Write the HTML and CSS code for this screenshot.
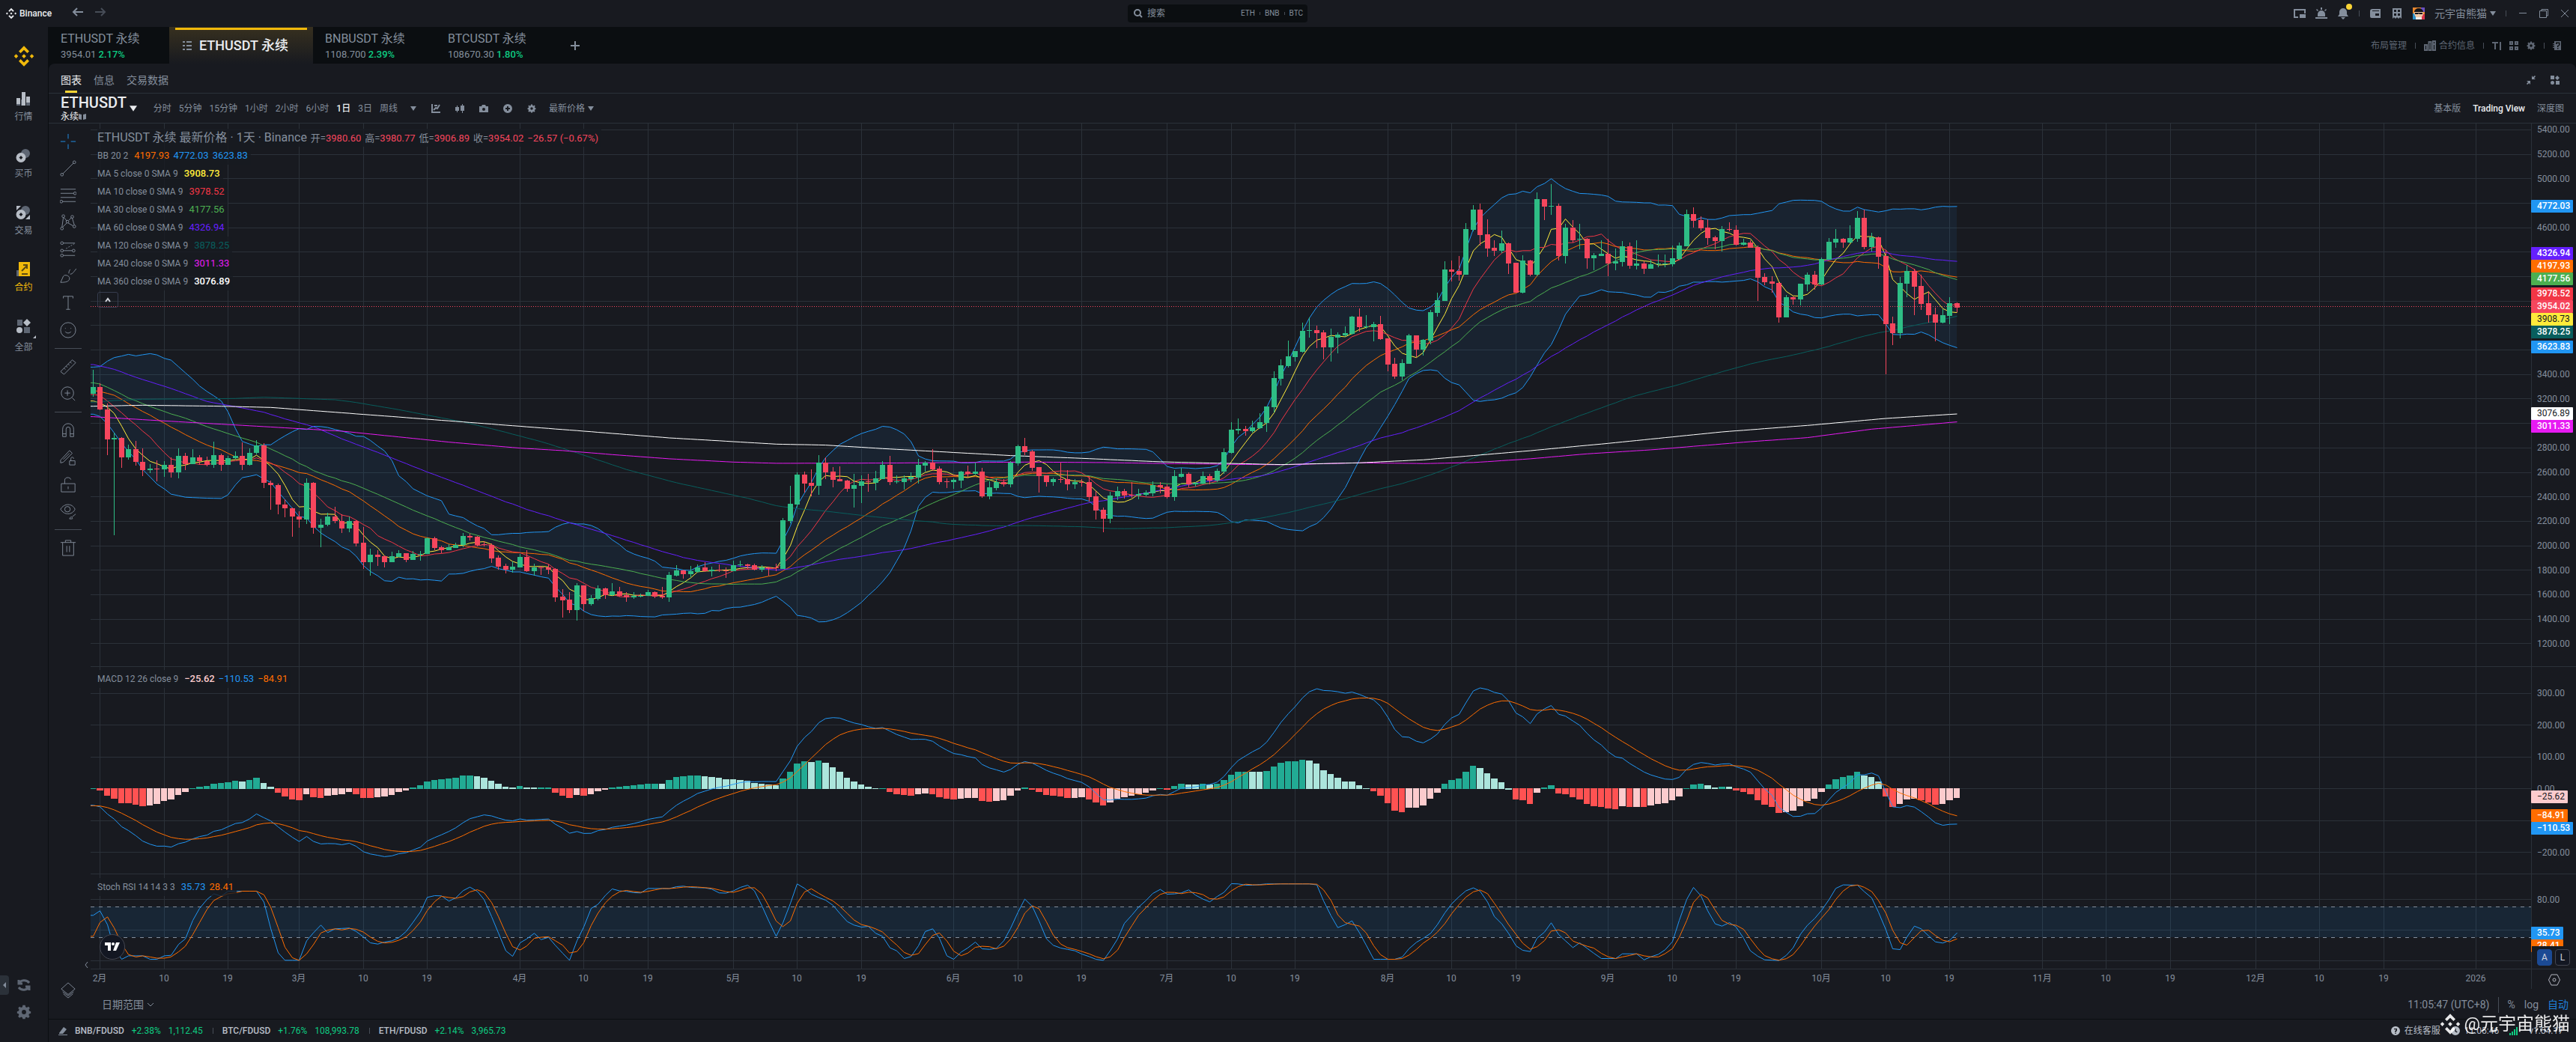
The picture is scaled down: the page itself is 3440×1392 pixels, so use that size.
FILE: index.html
```html
<!DOCTYPE html>
<html lang="zh-CN">
<head>
    <meta charset="UTF-8">
    <meta name="viewport" content="width=device-width, initial-scale=1.0">
    <title>ETHUSDT 永续 | Binance</title>
    <link rel="stylesheet" href="styles.css">
</head>
<body>
    <!-- Shared icons -->
    <svg class="sprite" width="0" height="0" aria-hidden="true">
        <symbol id="bnb" viewBox="0 0 24 24"><path d="M12 1l5.600 5.700-2.100 2.100L12 5.300 8.500 8.800 6.400 6.700zM3.600 9.700L5.800 12l-2.200 2.300L1.400 12zM12 9.700l2.300 2.300-2.300 2.300L9.700 12zM20.400 9.700l2.200 2.300-2.200 2.300-2.200-2.300zM8.500 15.200l3.500 3.500 3.500-3.500 2.100 2.100L12 23l-5.600-5.700z"/></symbol>
        <symbol id="gear" viewBox="0 0 24 24"><path fill-rule="evenodd" d="M10 1h4l.6 3 2 .9L19.300 3.200l2.100 2.500-1.600 2.500.8 1.900L23 11v3l-2.600.8-.8 1.900 1.500 2.500-2.500 2.300-2.300-1.500-2 .8L14 23h-4l-.6-2.300-2-.8-2.300 1.500-2.500-2.300 1.500-2.500-.8-1.900L1 14v-3l2.500-.9.8-1.900-1.600-2.500 2.100-2.500 2.600 1.700 2-.9zM12 8.500a3.500 3.500 0 1 0 0 7 3.500 3.500 0 0 0 0-7z"/></symbol>
        <symbol id="caret" viewBox="0 0 8 8"><path d="M0 1h8L4 7z"/></symbol>
    </svg>

    <header class="titlebar">
        <div class="brand"><svg class="i14"><use href="#bnb"/></svg><span>Binance</span></div>
        <button class="icon-btn back" aria-label="后退"><svg class="i16 line" viewBox="0 0 16 16"><path d="M15 8H2M7 3L2 8l5 5"/></svg></button>
        <button class="icon-btn forward" aria-label="前进"><svg class="i16 line" viewBox="0 0 16 16"><path d="M1 8h13M9 3l5 5-5 5"/></svg></button>
        <label class="search">
            <svg class="i12 line" viewBox="0 0 12 12"><circle cx="5" cy="5" r="4"/><path d="M8 8l3 3"/></svg>
            <input type="text" placeholder="搜索" aria-label="搜索">
            <span>ETH</span><i></i><span>BNB</span><i></i><span>BTC</span>
        </label>
        <div class="window-tools">
            <button class="icon-btn" aria-label="小窗"><svg class="i16" viewBox="0 0 16 16"><path d="M0 2h16v6h-2V4H2v8h4v2H0z"/><path d="M8 9h8v5H8z"/></svg></button>
            <button class="icon-btn" aria-label="提醒"><svg class="i16" viewBox="0 0 16 16"><path d="M0 13h16v2H0zM3 12V9a5 5 0 0 1 10 0v3zM7 0h2v3H7zM1 3l1-1 2 2-1 1zM14 2l1 1-2 2-1-1z"/></svg></button>
            <button class="icon-btn bell" aria-label="通知"><svg class="i16" viewBox="0 0 16 16"><path d="M1 12l2-3V6a5 5 0 0 1 10 0v3l2 3zM5 13h6l-3 3z"/></svg></button>
            <i class="bar"></i>
            <button class="icon-btn" aria-label="钱包"><svg class="i16" viewBox="0 0 16 16"><path fill-rule="evenodd" d="M4 2h11v12H3a2 2 0 0 1-2-2V5a3 3 0 0 1 3-3zM4 4v1h9V4zM8 8v3h5V8z"/></svg></button>
            <button class="icon-btn" aria-label="订单"><svg class="i16" viewBox="0 0 16 16"><path fill-rule="evenodd" d="M2 1h12v14l-2-2-2 2-2-2-2 2-2-2-2 2zM4 3v3h3V3zM9 3v3h3V3zM4 8v3h3V8zM9 8v3h3V8z"/></svg></button>
            <svg class="i16 avatar" viewBox="0 0 16 16"><path fill="#e8862e" d="M0 0h16v16H0z"/><path fill="#2d8fc9" d="M0 8h5v8H0z"/><path fill="#d8334a" d="M11 9h5v7h-5z"/><path fill="#6a4fc0" d="M11 0h5v6h-5z"/><circle cx="8" cy="8" r="6" fill="#f1c9a8"/><path fill="#15151a" d="M2 6a6 5 0 0 1 12 0zM3 7h10v2H9L8 8 7 9H3z"/><path fill="#eee" d="M4 13h8v3H4z"/></svg>
            <button class="user">元宇宙熊猫<svg class="i8"><use href="#caret"/></svg></button>
            <i class="bar"></i>
            <button class="icon-btn" aria-label="最小化"><svg class="i12 thin" viewBox="0 0 12 12"><path d="M1 5.500h10"/></svg></button>
            <button class="icon-btn" aria-label="还原"><svg class="i12 thin" viewBox="0 0 12 12"><path d="M.5 2.500h9v9h-9zM3 2V.5h8.500V9H10"/></svg></button>
            <button class="icon-btn" aria-label="关闭"><svg class="i12 thin" viewBox="0 0 12 12"><path d="M1 1l10 10M11 1L1 11"/></svg></button>
        </div>
    </header>

    <div class="workspace">
        <nav class="sidebar">
            <svg class="logo"><use href="#bnb"/></svg>
            <a href="#"><svg class="i20" viewBox="0 0 20 20"><path class="dim" d="M7 11h6v8H7zM1 17h5v2H1zM14 15h5v4h-5z"/><path d="M1 9h5v8H1zM8 1h5v18H8zM14 7h5v8h-5z"/></svg>行情</a>
            <a href="#"><svg class="i20" viewBox="0 0 20 20"><circle class="dim" cx="13" cy="7" r="6"/><path fill-rule="evenodd" d="M7 6a6.500 6.500 0 1 0 0 13A6.500 6.500 0 0 0 7 6zM7 10l2.500 2.500L7 15l-2.500-2.500z"/></svg>买币</a>
            <a href="#"><svg class="i20" viewBox="0 0 20 20"><circle class="dim" cx="13" cy="7" r="6"/><path fill-rule="evenodd" d="M7 6a6.500 6.500 0 1 0 0 13A6.500 6.500 0 0 0 7 6zM7 10l2.500 2.500L7 15l-2.500-2.500zM1 1h6L1 7zM19 13v6h-6z"/></svg>交易</a>
            <a href="#" class="on"><svg class="i20" viewBox="0 0 20 20"><path class="dim" d="M1 11h5v8H1z"/><path d="M4 0h15v19H4z"/><path fill="none" stroke="#5e4a12" stroke-width="2" d="M8 12l7-7M10 4h5v5M8 16h8"/></svg>合约</a>
            <a href="#" class="more"><svg class="i20" viewBox="0 0 20 20"><path class="dim" d="M2 1h7v8H2zM11 11h8v8h-8z"/><path d="M15 0l5 5-5 5-5-5z"/><circle cx="5" cy="15" r="4"/></svg>全部</a>
            <div class="sidebar-foot">
                <button class="collapse" aria-label="收起"><svg class="i8" viewBox="0 0 8 8"><path d="M6 0v8L2 4z"/></svg></button>
                <button class="icon-btn" aria-label="刷新"><svg class="i20 bold" viewBox="0 0 20 20"><path d="M3 3v5h5M3 8a8 7 0 0 1 14-1M17 17v-5h-5M17 12a8 7 0 0 1-14 1"/></svg></button>
                <button class="icon-btn" aria-label="设置"><svg class="i20"><use href="#gear"/></svg></button>
            </div>
        </nav>

        <main class="main">
            <div class="pairs">
                <a href="#" class="pair"><b>ETHUSDT 永续</b><span>3954.01 <em>2.17%</em></span></a>
                <a href="#" class="pair active"><svg class="i12" viewBox="0 0 12 12"><path d="M0 0h3v2H0zM5 0h7v2H5zM0 5h3v2H0zM5 5h7v2H5zM0 10h3v2H0zM5 10h7v2H5z"/></svg><b>ETHUSDT 永续</b></a>
                <a href="#" class="pair"><b>BNBUSDT 永续</b><span>1108.700 <em>2.39%</em></span></a>
                <a href="#" class="pair"><b>BTCUSDT 永续</b><span>108670.30 <em>1.80%</em></span></a>
                <button class="icon-btn add" aria-label="添加"><svg class="i12 line" viewBox="0 0 12 12"><path d="M6 0v12M0 6h12"/></svg></button>
                <div class="pairs-tools">
                    <button>布局管理</button><i class="bar"></i>
                    <button><svg class="i16 line" viewBox="0 0 16 16"><path d="M1 7h3v7H1zM6.500 3h3v11h-3zM12 2h3v12h-3zM12 6h3"/></svg>合约信息</button><i class="bar"></i>
                    <button aria-label="字体"><svg class="i12 line" viewBox="0 0 12 12"><path d="M0 2h8M4 2v9M11 1v11"/></svg></button>
                    <button aria-label="布局"><svg class="i12 line" viewBox="0 0 12 12"><path d="M1 1h3v3H1zM8 1h3v3H8zM1 8h3v3H1zM8 8h3v3H8z"/></svg></button>
                    <button aria-label="设置"><svg class="i12"><use href="#gear"/></svg></button><i class="bar"></i>
                    <button aria-label="帮助"><svg class="i12" viewBox="0 0 12 12"><path fill-rule="evenodd" d="M2 0h9v12H2V9H0V8h2V6.500H0v-1h2V4H0V3h2zM4 4h1.500V3H8v2L6 6v2h1.500V6.600L9.500 5.500v-4H4zM6 9v1.500h1.500V9z"/></svg></button>
                </div>
            </div>

            <section class="panel">
                <div class="subtabs">
                    <a href="#" class="on">图表</a><a href="#">信息</a><a href="#">交易数据</a>
                    <div class="subtabs-tools">
                        <button class="icon-btn" aria-label="缩小"><svg class="i12" viewBox="0 0 12 12"><path d="M7 0v5h5L10 3.500 12 1l-1-1-2.500 2zM5 12V7H0l2 1.500L0 11l1 1 2.500-2z"/></svg></button>
                        <button class="icon-btn" aria-label="组件"><svg class="i12" viewBox="0 0 12 12"><path d="M0 0h5v5H0zM9 0l3 3-3 3-3-3zM7 7h5v5H7z"/><circle cx="2.500" cy="9.500" r="2.500"/></svg></button>
                    </div>
                </div>

                <div class="toolbar">
                    <button class="symbol"><strong>ETHUSDT</strong><small>永续<svg class="i10" viewBox="0 0 10 10"><path d="M0 1l4 1v7L0 8zM10 1L6 2v7l4-1z"/></svg></small></button>
                    <svg class="i10 symbol-caret"><use href="#caret"/></svg>
                    <div class="intervals">
                        <button>分时</button><button>5分钟</button><button>15分钟</button><button>1小时</button><button>2小时</button><button>6小时</button><button class="on">1日</button><button>3日</button><button>周线</button>
                    </div>
                    <div class="chart-tools">
                        <button class="icon-btn" aria-label="更多周期"><svg class="i8"><use href="#caret"/></svg></button>
                        <button class="icon-btn" aria-label="指标"><svg class="i12 line" viewBox="0 0 12 12"><path d="M1 0v11h11M3 8l3-3 2 1 3-5M4 2l4 0"/></svg></button>
                        <button class="icon-btn" aria-label="K线样式"><svg class="i12" viewBox="0 0 12 12"><path d="M2 2h1v2h2v5H3v2H2V9H0V4h2zM9 0h1v2h2v7h-2v3H9V9H7V2h2z"/></svg></button>
                        <button class="icon-btn" aria-label="截图"><svg class="i12" viewBox="0 0 12 12"><path fill-rule="evenodd" d="M4 1h4l1 2h3v8H0V3h3zM6 5a2 2 0 1 0 0 4 2 2 0 0 0 0-4z"/></svg></button>
                        <button class="icon-btn" aria-label="添加"><svg class="i12" viewBox="0 0 12 12"><path fill-rule="evenodd" d="M6 0a6 6 0 1 0 0 12A6 6 0 0 0 6 0zM5 3h2v2h2v2H7v2H5V7H3V5h2z"/></svg></button>
                        <button class="icon-btn" aria-label="设置"><svg class="i12"><use href="#gear"/></svg></button>
                    </div>
                    <button class="price-type">最新价格<svg class="i8"><use href="#caret"/></svg></button>
                    <div class="views"><a href="#">基本版</a><a href="#" class="on">Trading View</a><a href="#">深度图</a></div>
                </div>

                <div class="chart-row">
                    <div class="draw-tools">
                        <button class="cross" aria-label="十字线"><svg viewBox="0 0 24 24"><path d="M12 1v7M12 16v7M1 12h7M16 12h7"/></svg></button>
                        <button aria-label="趋势线"><svg viewBox="0 0 24 24"><circle cx="3" cy="21" r="2"/><circle cx="21" cy="3" r="2"/><path d="M4.500 19.500l15-15"/></svg></button>
                        <button aria-label="斐波那契"><svg viewBox="0 0 24 24"><path d="M1 3h22M1 9h19M1 15h22M4 21h19"/><circle cx="22" cy="9" r="2"/><circle cx="2" cy="21" r="2"/></svg></button>
                        <button aria-label="形态"><svg viewBox="0 0 24 24"><circle cx="5" cy="3" r="2"/><circle cx="18" cy="4" r="2"/><circle cx="3" cy="21" r="2"/><circle cx="21" cy="18" r="2"/><circle cx="11" cy="11" r="2"/><path d="M5 5L3 19M6 5l4 5M13 9l4-4M18 6l3 10M4 19l6-6M12 13l7 4"/></svg></button>
                        <button aria-label="预测"><svg viewBox="0 0 24 24"><path d="M5 3h17M5 14h13M5 21h17"/><path stroke-dasharray="2 2" d="M9 11l12-7"/><circle cx="3" cy="3" r="2"/><circle cx="3" cy="14" r="2"/><circle cx="20" cy="14" r="2"/><circle cx="3" cy="21" r="2"/></svg></button>
                        <button aria-label="画笔"><svg viewBox="0 0 24 24"><path d="M1 21l4-9c2-3 9-1 9 3 0 5-6 6-13 6zM13 8c0-4 1-4 2-6M15 9c4 0 6-5 9-8"/></svg></button>
                        <button aria-label="文字"><svg viewBox="0 0 24 24"><path d="M5 5V2h14v3M12 2v19M9 21h6"/></svg></button>
                        <button aria-label="表情"><svg viewBox="0 0 24 24"><circle cx="12" cy="12" r="11"/><path d="M8 9v1M16 9v1M8 14c1 3 7 3 8 0"/></svg></button>
                        <hr>
                        <button aria-label="测量"><svg viewBox="0 0 24 24"><path d="M1 19L18 2l5 4L6 23zM6 14l2 2M9 11l2 2M12 8l2 2M15 5l2 2"/></svg></button>
                        <button aria-label="放大"><svg viewBox="0 0 24 24"><circle cx="11" cy="11" r="9"/><path d="M11 7v8M7 11h8M18 18l4 4"/></svg></button>
                        <hr>
                        <button aria-label="磁铁"><svg viewBox="0 0 24 24"><path d="M4 21V10a8 8 0 0 1 16 0v11h-5V10a3 3 0 0 0-6 0v11zM4 17h5M15 17h5"/></svg></button>
                        <button aria-label="保持绘图"><svg viewBox="0 0 24 24"><path d="M1 16L14 2l4 4L5 19l-4 1zM5 15L14 6M14 17h8v6h-8zM16 17v-3c0-3 4-3 4 0"/></svg></button>
                        <button aria-label="锁定"><svg viewBox="0 0 24 24"><path d="M2 11h20v12H2zM7 11V6c0-5 8-5 9-1M12 15v4"/></svg></button>
                        <button aria-label="隐藏"><svg viewBox="0 0 24 24"><path d="M1 9c5-9 17-9 21 0-4 9-16 9-21 0zM14 23c2-5 5-2 4 0zM18 20l5-4"/><circle cx="11" cy="9" r="4"/></svg></button>
                        <hr>
                        <button aria-label="删除"><svg viewBox="0 0 24 24"><path d="M1 4h22M8 4V1h8v3M4 4v19h16V4M10 9v9M14 9v9"/></svg></button>
                        <button class="layers" aria-label="对象树"><svg viewBox="0 0 24 24"><path d="M12 1l10 9-10 8L2 10zM4 14l8 6 8-6M5 17l7 6 7-6"/></svg></button>
                    </div>

                    <div class="chart-col">
                        <div class="stage" id="stage">
                            <svg id="chart" class="chart"></svg>
                            <div class="legend">
                                <p class="legend-title">ETHUSDT 永续 最新价格 · 1天 · Binance <span>开=<em>3980.60</em></span> <span>高=<em>3980.77</em></span> <span>低=<em>3906.89</em></span> <span>收=<em>3954.02</em></span> <span><em>−26.57 (−0.67%)</em></span></p>
                                <p>BB 20 2 <span class="c-orange">4197.93</span><span class="c-blue">4772.03</span><span class="c-blue">3623.83</span></p>
                                <p>MA 5 close 0 SMA 9 <span class="c-yellow">3908.73</span></p>
                                <p>MA 10 close 0 SMA 9 <span class="c-red">3978.52</span></p>
                                <p>MA 30 close 0 SMA 9 <span class="c-green">4177.56</span></p>
                                <p>MA 60 close 0 SMA 9 <span class="c-violet">4326.94</span></p>
                                <p>MA 120 close 0 SMA 9 <span class="c-teal">3878.25</span></p>
                                <p>MA 240 close 0 SMA 9 <span class="c-magenta">3011.33</span></p>
                                <p>MA 360 close 0 SMA 9 <span class="c-white">3076.89</span></p>
                                <button class="legend-toggle" aria-label="收起"><svg class="i8 line" viewBox="0 0 8 8"><path d="M1 6l3-4 3 4"/></svg></button>
                            </div>
                            <div class="legend legend-macd"><p>MACD 12 26 close 9 <span class="c-pink">−25.62</span><span class="c-blue">−110.53</span><span class="c-orange">−84.91</span></p></div>
                            <div class="legend legend-stoch"><p>Stoch RSI 14 14 3 3 <span class="c-blue">35.73</span><span class="c-orange">28.41</span></p></div>
                            <a href="#" class="tv-logo" aria-label="TradingView"><svg width="20" height="12" viewBox="0 0 20 12"><path fill="#fff" d="M0 0h8v11H4V4H0zM15 0h5l-5 11h-4z"/><circle cx="11" cy="2" r="2" fill="#fff"/></svg></a>
                            <button class="hide-tools" aria-label="隐藏工具栏"><svg class="i8 thin" viewBox="0 0 8 8"><path d="M5 0L2 4l3 4"/></svg></button>
                            <div class="scale-mode"><button class="on">A</button><button>L</button></div>
                            <button class="scale-settings" aria-label="坐标设置"><svg width="16" height="16" viewBox="0 0 16 16"><path d="M4 1h8l3.500 7-3.500 7H4L.5 8z"/><circle cx="8" cy="8" r="2"/></svg></button>
                        </div>
                        <div class="range-bar">
                            <button class="range">日期范围<svg class="i10 thin" viewBox="0 0 10 10"><path d="M1 3l4 4 4-4"/></svg></button>
                            <div class="range-right"><button>11:05:47 (UTC+8)</button><i></i><button>%</button><button>log</button><button class="on">自动</button></div>
                        </div>
                    </div>
                </div>
            </section>

            <footer class="status">
                <svg class="i12" viewBox="0 0 12 12"><path d="M1 9l6-8 4 3-5 6H1zM0 11h12v1H0z"/></svg>
                <a href="#"><b>BNB/FDUSD</b><span>+2.38%</span><span>1,112.45</span></a>
                <a href="#"><b>BTC/FDUSD</b><span>+1.76%</span><span>108,993.78</span></a>
                <a href="#"><b>ETH/FDUSD</b><span>+2.14%</span><span>3,965.73</span></a>
                <div class="status-right">
                    <button><svg class="i12" viewBox="0 0 12 12"><path fill-rule="evenodd" d="M6 0a6 6 0 1 0 0 12A6 6 0 0 0 6 0zM4 3h4v3L6.700 7v1H5.300V6l1.300-1V4.300H4zM5.300 8.700h1.400V10H5.300z"/></svg>在线客服</button>
                    <span><svg class="i12" viewBox="0 0 12 12"><path fill-rule="evenodd" d="M6 0a6 6 0 1 0 0 12A6 6 0 0 0 6 0zM5.300 3h1.400v3l2 1.500-.8 1L5.300 7z"/></svg>11:05:46</span>
                    <span class="net"><svg class="i12" viewBox="0 0 12 12"><path d="M0 9h2v3H0zM3 7h2v5H3zM6 4h2v8H6zM9 1h2v11H9z"/></svg></span>
                    <span>v1.54.17</span>
                </div>
            </footer>
        </main>
    </div>

    <div class="watermark"><svg><use href="#bnb"/></svg>@元宇宙熊猫</div>

    <script src="chart.js"></script>
</body>
</html>
```
FILE: styles.css
```css
* {
    box-sizing: border-box;
}
body {
    margin: 0;
    height: 100vh;
    display: flex;
    flex-direction: column;
    overflow: hidden;
    background-color: #181a20;
    color: #848e9c;
    font-family: Roboto, "Noto Sans CJK SC", sans-serif;
    font-size: 12px;
    line-height: 16px;
}
a {
    color: inherit;
    text-decoration: none;
}
em, i {
    font-style: normal;
}
p {
    margin: 0;
}
button {
    display: flex;
    align-items: center;
    padding: 0;
    border: none;
    background: none;
    color: inherit;
    font: inherit;
    white-space: nowrap;
    cursor: pointer;
}
svg {
    flex: none;
    fill: currentColor;
}
.sprite {
    position: absolute;
}
.i8 { width: 8px; height: 8px; }
.i10 { width: 10px; height: 10px; }
.i12 { width: 12px; height: 12px; }
.i14 { width: 16px; height: 16px; }
.i16 { width: 16px; height: 16px; }
.i20 { width: 20px; height: 20px; }
.line, .thin, .bold {
    fill: none;
    stroke: currentColor;
}
.line { stroke-width: 2; }
.thin { stroke-width: 1; }
.bold { stroke-width: 3; }
.bar {
    width: 1px;
    height: 8px;
    background-color: #474d57;
}

/* title bar */
.titlebar {
    position: relative;
    flex: none;
    display: flex;
    align-items: center;
    height: 36px;
    padding: 0 9px 0 7px;
}
.brand {
    display: flex;
    align-items: center;
    gap: 3px;
    width: 89px;
    color: #eaecef;
    font-weight: 500;
}
.back { margin-right: 14px; }
.back, .forward { margin-bottom: 4px; }
.forward { color: #474d57; }
.search {
    position: absolute;
    left: 50%;
    top: 6px;
    display: flex;
    align-items: center;
    gap: 6px;
    width: 240px;
    height: 24px;
    margin-left: -214px;
    padding: 0 6px 0 8px;
    border-radius: 4px;
    background-color: #0b0e11;
    font-size: 10px;
}
.search input {
    flex: 1;
    min-width: 0;
    padding: 0;
    border: none;
    outline: none;
    background: none;
    color: #eaecef;
    font: inherit;
    font-size: 12px;
}
.search input::placeholder {
    color: #848e9c;
}
.search i {
    width: 1px;
    height: 4px;
    background-color: #474d57;
}
.window-tools {
    display: flex;
    align-items: center;
    gap: 13px;
    margin-left: auto;
}
.window-tools .icon-btn:nth-last-child(-n+3) {
    margin-left: 3px;
}
.bell {
    position: relative;
}
.bell::after {
    content: "";
    position: absolute;
    right: -4px;
    top: -5px;
    width: 8px;
    height: 8px;
    border-radius: 50%;
    background-color: #fcd535;
}
.user {
    gap: 4px;
    font-size: 14px;
}

.workspace {
    flex: 1;
    min-height: 0;
    display: flex;
}

/* left navigation */
.sidebar {
    flex: none;
    display: flex;
    flex-direction: column;
    align-items: center;
    width: 65px;
    padding-top: 24px;
    border-right: 1px solid #0b0e11;
}
.logo {
    width: 30px;
    height: 30px;
    margin-bottom: 32px;
    color: #f0b90b;
}
.sidebar a {
    display: flex;
    flex-direction: column;
    align-items: center;
    gap: 6px;
    height: 76px;
    margin-left: -1px;
}
.sidebar a svg {
    color: #b7bdc6;
}
.sidebar .dim {
    fill: #5e6673;
}
.sidebar .on,
.sidebar .on svg {
    color: #f0b90b;
}
.sidebar .more {
    position: relative;
    gap: 10px;
}
.more::after {
    content: "";
    position: absolute;
    right: -4px;
    top: 22px;
    border: 2px solid transparent;
    border-right-color: #b7bdc6;
    border-bottom-color: #b7bdc6;
}
.sidebar-foot {
    position: relative;
    display: flex;
    flex-direction: column;
    align-items: center;
    gap: 16px;
    width: 100%;
    margin-top: auto;
    padding-bottom: 30px;
    color: #5e6673;
}
.collapse {
    position: absolute;
    left: 0;
    top: -3px;
    width: 12px;
    height: 26px;
    padding-left: 2px;
    border-radius: 0 4px 4px 0;
    background-color: #2b3139;
    color: #848e9c;
}

/* pair tabs */
.main {
    flex: 1;
    min-width: 0;
    display: flex;
    flex-direction: column;
    background-color: #0b0e11;
}
.pairs {
    flex: none;
    display: flex;
    align-items: center;
    height: 49px;
}
.pair {
    display: flex;
    flex-direction: column;
    gap: 5px;
    width: 164px;
    padding: 3px 0 0 16px;
    font-size: 13px;
}
.pair:first-child {
    width: 161px;
}
.pair b {
    font-size: 16px;
    font-weight: 400;
}
.pair em {
    color: #0ecb81;
    font-weight: 500;
}
.pair.active {
    position: relative;
    flex-direction: row;
    align-items: center;
    gap: 10px;
    width: 192px;
    height: 49px;
    padding: 0 0 0 18px;
    background: linear-gradient(#37301f, #181a20);
}
.pair.active b {
    color: #eaecef;
    font-size: 18px;
    font-weight: 500;
}
.pair.active::before {
    content: "";
    position: absolute;
    left: 8px;
    right: 8px;
    top: 1px;
    height: 3px;
    background-color: #f0b90b;
}
.add {
    margin-left: 16px;
}
.pairs-tools {
    display: flex;
    align-items: center;
    gap: 11px;
    margin-left: auto;
    padding-right: 19px;
    color: #5e6673;
}
.pairs-tools button {
    gap: 4px;
}

/* chart panel */
.panel {
    flex: 1;
    min-height: 0;
    display: flex;
    flex-direction: column;
    border-radius: 8px 8px 0 0;
    background-color: #181a20;
}
.subtabs {
    flex: none;
    display: flex;
    align-items: center;
    gap: 16px;
    height: 40px;
    padding: 4px 22px 0 16px;
    border-bottom: 1px solid #2b3139;
    font-size: 14px;
}
.subtabs a {
    position: relative;
    line-height: 34px;
}
.subtabs .on {
    color: #eaecef;
}
.subtabs .on::after {
    content: "";
    position: absolute;
    left: 6px;
    right: 6px;
    bottom: 0;
    height: 3px;
    background-color: #fcd535;
}
.subtabs-tools {
    display: flex;
    gap: 20px;
    margin-left: auto;
}
.toolbar {
    flex: none;
    display: flex;
    align-items: center;
    height: 40px;
    padding: 0 16px;
    border-bottom: 1px solid #2b3139;
}
.symbol {
    flex-direction: column;
    align-items: flex-start;
    color: #eaecef;
}
.symbol strong {
    font-size: 20px;
    font-weight: 500;
    line-height: 22px;
}
.symbol small {
    display: flex;
    align-items: center;
    font-size: 12px;
}
.symbol small svg {
    color: #848e9c;
}
.symbol-caret {
    margin: 0 22px 0 4px;
    color: #eaecef;
}
.intervals {
    display: flex;
    gap: 10px;
}
.intervals .on,
.views .on {
    color: #eaecef;
    font-weight: 500;
}
.chart-tools {
    display: flex;
    align-items: center;
    gap: 20px;
    margin: 0 17px;
}
.price-type {
    gap: 4px;
}
.views {
    display: flex;
    gap: 16px;
    margin-left: auto;
}

.chart-row {
    flex: 1;
    min-height: 0;
    display: flex;
}
.draw-tools {
    flex: none;
    display: flex;
    flex-direction: column;
    align-items: center;
    width: 56px;
    padding: 6px 4px 20px 0;
}
.draw-tools button {
    height: 36px;
}
.draw-tools svg {
    width: 22px;
    height: 22px;
    fill: none;
    stroke: #848e9c;
}
.draw-tools .cross svg {
    stroke: #2196f3;
}
.draw-tools hr {
    width: 36px;
    margin: 6px 0;
    border: none;
    border-top: 1px solid #474d57;
}
.draw-tools .layers {
    margin-top: auto;
}
.chart-col {
    flex: 1;
    min-width: 0;
    display: flex;
    flex-direction: column;
}
.stage {
    position: relative;
    flex: 1;
    min-height: 0;
}
.chart {
    display: block;
    width: 100%;
    height: 100%;
}
.chart text {
    fill: #848e9c;
    font-size: 12px;
}
.chart .tag {
    fill: #fff;
    font-weight: 500;
}
.chart .tag.dark {
    fill: #131722;
    font-weight: 400;
}

/* indicator legends over the panes */
.legend {
    position: absolute;
    left: 9px;
    top: 7px;
    display: flex;
    flex-direction: column;
    align-items: flex-start;
}
.legend p {
    height: 24px;
    line-height: 24px;
    padding-right: 4px;
    background-color: rgba(24, 26, 32, 0.8);
}
.legend p span {
    margin-left: 5px;
    font-size: 13px;
}
.legend .legend-title {
    font-size: 16px;
}
.legend .legend-title span {
    margin-left: 1px;
}
.legend-title em {
    color: #f6465d;
}
.legend-macd {
    top: 64%;
    margin-top: -10px;
}
.legend-stoch {
    top: 88%;
    margin-top: -9px;
}
.legend-toggle {
    justify-content: center;
    width: 28px;
    height: 21px;
    margin-top: 2px;
    border: 1px solid #363c4e;
    border-radius: 3px;
    color: #d1d4dc;
}
.c-orange { color: #ff6d00; }
.c-blue { color: #2196f3; }
.c-yellow { color: #ffeb3b; font-weight: 500; }
.c-red { color: #f23645; }
.c-green { color: #4caf50; }
.c-violet { color: #651fff; }
.c-teal { color: #085e5d; }
.c-magenta { color: #e71af3; }
.c-white { color: #fff; font-weight: 500; }
.c-pink { color: #fccbcd; font-weight: 500; }
.tv-logo {
    position: absolute;
    left: 12px;
    bottom: 39px;
    display: flex;
    align-items: center;
    justify-content: center;
    width: 34px;
    height: 34px;
    border: 1px solid #434651;
    border-radius: 50%;
    background-color: #131722;
}
.hide-tools {
    position: absolute;
    left: -9px;
    bottom: 28px;
}
.scale-mode {
    position: absolute;
    right: 8px;
    bottom: 31px;
    display: flex;
    gap: 4px;
}
.scale-mode button {
    justify-content: center;
    width: 20px;
    height: 22px;
    border: 1px solid #434651;
    border-radius: 4px;
    background-color: #131722;
    color: #d1d4dc;
}
.scale-mode .on {
    border-color: #1b4a94;
    background-color: #1b4a94;
}
.scale-settings {
    position: absolute;
    right: 21px;
    bottom: 4px;
    color: #b2b5be;
}
.scale-settings svg {
    fill: none;
    stroke: currentColor;
}
.range-bar {
    flex: none;
    display: flex;
    align-items: center;
    justify-content: space-between;
    height: 40px;
    padding: 2px 10px 0 15px;
    font-size: 14px;
}
.range {
    gap: 4px;
}
.range-right {
    display: flex;
    align-items: center;
    gap: 12px;
}
.range-right i {
    width: 1px;
    height: 21px;
    margin-right: -1px;
    background-color: #474d57;
}
.range-right .on {
    color: #1e80d8;
}

/* status bar */
.status {
    flex: none;
    display: flex;
    align-items: center;
    height: 31px;
    padding: 0 17px 0 13px;
    border-top: 1px solid #0b0e11;
    background-color: #181a20;
}
.status a {
    display: flex;
    gap: 10px;
    padding: 0 13px;
    color: #0ecb81;
}
.status a:first-of-type {
    padding-left: 10px;
}
.status a + a {
    background: linear-gradient(#474d57, #474d57) no-repeat left center / 1px 8px;
}
.status b {
    color: #b7bdc6;
    font-weight: 500;
}
.status-right {
    display: flex;
    align-items: center;
    gap: 14px;
    margin-left: auto;
    color: #b7bdc6;
}
.status-right button,
.status-right span {
    display: flex;
    align-items: center;
    gap: 6px;
}
.status-right .net {
    color: #0ecb81;
}
.watermark {
    position: fixed;
    right: 8px;
    bottom: 8px;
    display: flex;
    align-items: center;
    gap: 3px;
    color: #fff;
    font-size: 24px;
    line-height: 32px;
    opacity: 0.9;
}
.watermark svg {
    width: 30px;
    height: 30px;
}
```
FILE: chart.js
```js
// One tick is the smallest step the quotes are stored in.
// Each block holds [open, close, high, low] as ticks below its base price.
const TICK = 2.038;

const blocks = [
    { base: 4131.3, bars: [
        [435,408,339,449],[408,500,393,503],[498,620,474,683],[620,612,593,1004],[612,690,609,734],
        [690,657,639,701],[657,710,624,725],[708,743,654,767],[743,735,717,755],[735,737,702,788],
        [740,720,705,770],[720,752,690,773],[752,684,654,776],[684,717,672,743],[717,690,657,719],
        [690,707,681,722],[705,722,687,728],[722,681,627,734],[681,720,675,746],[720,693,684,722],
        [695,684,666,696],[684,722,630,743],[722,672,654,725],[674,642,621,680],[642,794,633,815],
        [792,803,783,902],[801,881,795,920],[879,896,858,932],[894,929,891,1010],[927,941,906,974],
        [941,792,774,959],[792,974,789,998],[974,960,936,1052],[962,927,912,968],[927,947,888,956],
        [945,977,918,995],[977,945,927,992],[945,1037,942,1049],[1035,1112,969,1139],[1112,1083,1059,1166],
        [1083,1091,1065,1128],[1089,1112,1086,1133],[1112,1089,1071,1112],[1091,1077,1065,1091],[1077,1103,1075,1112],
        [1103,1080,1068,1103],[1080,1079,1068,1106],[1079,1017,1014,1080],[1017,1055,1011,1063],[1053,1064,1047,1075],
        [1064,1052,1040,1065],[1055,1042,1035,1056],[1042,1005,993,1052],[1005,1014,996,1026],[1011,1043,1005,1050],
        [1041,1043,1029,1050],[1043,1097,1038,1116],[1095,1130,1086,1142],[1128,1142,1119,1158],[1142,1131,1110,1155],
        [1133,1092,1080,1134],[1092,1148,1065,1150],[1148,1134,1119,1166],[1134,1136,1128,1163],[1134,1142,1122,1161],
        [1140,1253,1137,1271],[1251,1265,1220,1334],[1263,1304,1233,1316],[1304,1206,1197,1346],[1206,1280,1206,1307],
        [1280,1257,1245,1286],[1259,1218,1206,1265],[1218,1244,1215,1259],[1244,1230,1197,1246],[1230,1247,1212,1250],
        [1245,1254,1233,1271],[1253,1247,1233,1259],[1247,1246,1239,1253],[1246,1233,1224,1247],[1233,1250,1230,1256],
        [1248,1253,1212,1259],[1253,1164,1152,1271],[1166,1146,1125,1170],[1146,1160,1142,1178],[1160,1149,1128,1172],
        [1151,1134,1122,1154],[1134,1148,1113,1151],[1148,1143,1131,1169],[1143,1144,1122,1152],[1144,1148,1134,1175],
        [1148,1125,1107,1149],[1124,1122,1107,1131],[1122,1128,1119,1139]
    ] },
    { base: 3397.6, bars: [
        [765,782,759,784],[782,774,765,791],[774,776,771,806],[774,776,759,789],[779,582,573,780],
        [585,516,444,594],[519,399,390,531],[399,435,387,471],[432,444,378,486],[444,351,321,480],
        [351,390,330,417],[387,420,369,450],[417,426,366,426],[423,456,420,468],[456,441,396,531],
        [444,426,402,513],[426,429,396,468],[432,414,384,462],[417,360,345,417],[360,429,324,441],
        [429,426,402,435],[429,414,402,459],[417,408,390,429],[411,360,336,435],[363,351,345,387],
        [351,378,297,384],[375,429,366,438],[426,429,414,453],[429,420,414,456],[423,387,384,453],
        [387,396,363,408],[396,387,351,399],[387,486,372,492],[486,450,426,498],[453,429,414,462],
        [429,438,417,447],[438,351,345,450],[354,285,279,363],[285,309,252,321],[306,372,300,384],
        [369,405,369,471],[402,429,402,447],[429,417,411,444],[417,419,351,432],[417,438,381,462],
        [438,429,417,456],[429,431,417,447],[429,489,405,507],[486,543,465,579],[540,576,531,630],
        [576,483,468,594],[486,465,447,501],[465,483,456,495],[480,483,429,492],[483,477,456,498],
        [480,471,462,486],[474,441,426,486],[441,450,429,474],[447,489,438,495],[489,405,381,504],
        [408,396,372,411],[396,438,390,450],[438,432,429,447],[435,405,387,438],[405,423,396,438],
        [423,384,375,429],[387,309,294,396],[312,219,189,315],[222,216,174,237],[216,225,204,243],
        [225,210,183,231]
    ] },
    { base: 5109.6, bars: [
        [1053,1029,993,1056],[1032,966,966,1068],[969,852,825,990],[855,801,777,882],[804,765,702,810],
        [768,744,744,786],[747,663,630,750],[663,660,609,690],[660,672,642,732],[669,729,660,777],
        [729,687,654,786],[690,678,669,753],[681,672,645,687],[675,606,603,678],[606,648,573,666],
        [648,645,600,654],[648,636,627,705],[636,696,603,699],[693,798,693,825],[795,846,771,855],
        [846,792,777,861],[795,681,675,795],[681,738,681,768],[738,699,696,762],[702,588,579,717],
        [591,540,510,606],[543,417,384,543],[417,426,381,465],[423,438,363,462],[438,255,231,438],
        [258,177,159,264],[177,279,153,321],[276,333,216,366],[330,342,300,363],[342,312,261,351],
        [312,393,309,435],[390,510,390,510],[510,381,360,513],[381,438,378,444],[438,135,108,444],
        [135,165,135,219],[165,162,75,198],[162,363,153,381],[363,249,234,393],[249,300,219,309],
        [297,294,234,336],[294,372,291,414],[372,360,351,420],[363,354,300,363],[354,393,294,444],
        [393,384,333,420],[387,324,303,405],[324,402,309,414],[402,393,300,417],[393,414,384,435],
        [414,396,378,414],[396,394,357,408],[396,394,357,408],[396,372,321,405],[375,321,309,378],
        [324,195,177,324],[195,222,168,249],[219,252,204,261],[249,291,216,318],[288,303,282,336],
        [303,255,243,345],[255,258,228,264],[258,318,240,321],[318,309,294,321],[309,330,300,330],
        [327,450,321,543],[447,468,432,480],[465,474,444,510],[471,609,468,630],[609,528,519,609],
        [528,537,525,558],[537,474,474,561],[477,438,429,504],[438,477,423,498],[477,375,369,480],
        [378,306,291,378],[309,294,255,330],[294,309,291,330],[309,291,240,312],[294,210,183,306],
        [210,327,177,336],[327,288,270,345],[288,366,285,414],[363,636,339,837],[633,672,606,720],
        [672,471,447,693],[474,424,399,528],[424,486,415,600],[483,555,438,579],[552,600,504,630],
        [597,630,570,705],[630,600,577,633],[603,552,528,636],[552,570,549,588]
    ] }
];

const lead = {
    ma5: [[0,465],[1,472],[2,490],[3,515]],
    ma10: [[0,439],[1,443],[3,488],[5,537],[8,610]],
    ma30: [[0,392],[1,397],[3,423],[5,453],[8,487],[11,517],[13,534],[16,568],[20,605],[23,631],[26,671],[28,698]],
    ma60: [[0,319],[1,325],[3,338],[6,370],[8,388],[11,415],[16,467],[21,493],[24,510],[27,537],[31,568],[35,617],[40,671],[47,750],[52,803],[57,858],[58,870]],
    ma120: [[0,470],[3,463],[7,458],[20,455],[24,450],[30,456],[34,460],[37,471],[43,500],[47,522],[52,549],[57,583],[63,628],[68,673],[75,740],[82,793],[92,855],[96,885],[99,897],[103,907],[109,927],[115,944],[118,950]],
    ma240: [[0,528],[10,545],[23,566],[35,586],[45,615],[50,630],[60,654],[66,664],[73,680],[81,697],[90,710],[96,715],[111,714],[132,710],[142,712],[151,716],[160,719],[167,721],[178,713],[187,716],[194,712],[202,697],[210,677],[219,661],[233,628],[241,612],[250,578],[262,549]],
    ma360: [[0,486],[7,482],[18,486],[25,491],[40,523],[52,549],[69,586],[81,613],[90,628],[96,638],[103,642],[111,656],[129,684],[139,695],[150,709],[156,713],[167,720],[178,713],[187,701],[201,667],[213,635],[229,589],[241,563],[252,535],[262,517]],
    basis: [[0,423],[1,427],[3,442],[6,492],[8,522],[11,570],[14,615],[16,642],[18,661]],
    upper: [[0,329],[1,327],[2,305],[3,291],[5,278],[6,284],[8,275],[9,280],[10,294],[11,301],[12,328],[13,352],[14,378],[15,405],[16,427],[17,444],[18,465]],
    lower: [[0,518],[1,527],[2,557],[3,593],[4,635],[5,668],[6,700],[7,740],[8,770],[9,798],[10,818],[11,839],[13,851],[16,855],[18,856]]
};

// Stoch RSI %K as [bar, value * 3.07 below 1180]
const stochK = [[0,998],[1,980],[2,1035],[3,1130],[4,1174],[5,1160],[7,1160],[8,1174],[9,1174],[10,1160],[11,1158],[12,1114],[13,1092],[14,1018],[15,970],[16,934],[17,912],[18,921],[19,901],[23,901],[24,945],[25,1050],[26,1148],[27,1178],[29,1178],[30,1100],[31,1068],[32,1037],[33,1067],[34,1052],[36,1049],[37,1062],[38,1085],[39,1108],[40,1113],[41,1105],[42,1100],[43,1088],[44,1062],[45,1026],[46,984],[47,926],[48,919],[49,920],[50,941],[51,928],[52,899],[53,885],[54,902],[55,935],[56,1003],[57,1068],[58,1140],[59,1162],[60,1108],[61,1092],[62,1070],[63,1095],[64,1086],[65,1118],[66,1150],[67,1178],[68,1100],[69,1045],[70,970],[71,954],[72,918],[73,892],[74,900],[75,902],[76,907],[77,908],[78,890],[81,891],[82,883],[83,881],[84,886],[86,888],[87,893],[88,908],[89,909],[90,900],[91,886],[92,877],[93,900],[94,960],[95,1020],[96,1082],[97,1028],[98,950],[99,872],[100,890],[101,913],[102,927],[103,937],[104,958],[105,990],[106,1023],[107,1037],[108,1045],[109,1042],[110,1070],[111,1082],[112,1128],[113,1140],[114,1171],[115,1163],[116,1120],[117,1063],[118,1052],[119,1090],[120,1160],[121,1174],[122,1145],[123,1128],[124,1105],[125,1132],[126,1134],[127,1130],[128,1100],[129,1050],[130,985],[131,933],[132,962],[133,1020],[134,1092],[135,1118],[136,1129],[137,1134],[138,1140],[139,1153],[140,1163],[141,1174],[142,1178],[143,1140],[144,1092],[145,1030],[146,997],[147,965],[148,938],[149,910],[150,894],[151,913],[152,912],[153,908],[154,896],[155,917],[156,933],[157,944],[158,922],[159,906],[160,871],[161,872],[162,877],[163,877],[165,872],[171,872],[172,876],[173,940],[174,1000],[175,1047],[176,1035],[177,1020],[178,1068],[179,1118],[180,1174],[183,1174],[184,1165],[185,1132],[186,1106],[187,1090],[188,1070],[189,1035],[190,988],[191,952],[192,923],[193,900],[194,888],[195,901],[196,945],[197,1002],[198,1032],[199,1070],[200,1120],[201,1138],[202,1143],[203,1090],[204,1065],[205,1028],[206,1075],[207,1100],[208,1127],[209,1108],[210,1130],[211,1150],[212,1171],[214,1171],[215,1152],[217,1152],[218,1176],[219,1164],[220,1154],[221,1136],[222,1103],[223,1018],[224,934],[225,886],[226,920],[227,980],[228,1032],[229,1041],[230,1027],[231,1045],[232,1090],[233,1140],[234,1162],[235,1176],[237,1179],[238,1158],[239,1128],[240,1073],[241,1038],[242,1010],[243,978],[244,935],[245,890],[246,876],[248,877],[249,903],[250,928],[251,985],[252,1056],[253,1132],[254,1135],[255,1085],[256,1041],[257,1052],[258,1080],[259,1104],[260,1109],[261,1098],[262,1068]];

const bars = blocks.flatMap(b => b.bars.map(bar => bar.map(t => b.base - t * TICK)));
const closes = bars.map(b => b[1]);

function lerp(points, i) {
    let n = points.findIndex(p => p[0] >= i);
    if (n === 0) return points[0][1];
    if (n < 0) return points[points.length - 1][1];
    const [x0, y0] = points[n - 1], [x1, y1] = points[n];
    return y0 + (y1 - y0) * (i - x0) / (x1 - x0);
}

function early(points, i) {
    return 4131.3 - lerp(points, i) * TICK;
}

function sma(n, points) {
    return closes.map((c, i) => {
        if (i < n - 1) return early(points, i);
        return closes.slice(i - n + 1, i + 1).reduce((a, b) => a + b) / n;
    });
}

function band(side, points) {
    return closes.map((c, i) => {
        if (i < 19) return early(points, i);
        const win = closes.slice(i - 19, i + 1);
        const mean = win.reduce((a, b) => a + b) / 20;
        const dev = Math.sqrt(win.reduce((a, b) => a + (b - mean) ** 2, 0) / 20);
        return mean + side * 2 * dev;
    });
}

function macd() {
    let fast = 3223.4, slow = 3275, signal = -53.2;
    return closes.map((c, i) => {
        if (i > 0) {
            fast += (c - fast) * 2 / 13;
            slow += (c - slow) * 2 / 27;
            signal += (fast - slow - signal) * 2 / 10;
        }
        return { line: fast - slow, signal: signal, hist: fast - slow - signal };
    });
}

function draw() {
    const stage = document.getElementById('stage');
    const W = stage.clientWidth, H = stage.clientHeight;
    const k = H / 1157;
    const axisX = W - 60;
    const bottom = Math.round(1130 * k);
    const barX = i => Math.floor(3 + 9.5 * i);
    const priceY = p => (8.5 + (5400 - p) * 0.16355) * k;
    const macdY = v => (889.5 - v * 0.426) * k;
    const stochY = v => (1119.5 - v * 1.025) * k;

    let out = '';
    const rect = (x, y, w, h, fill, extra = '') => {
        out += `<rect x="${x}" y="${y}" width="${w}" height="${h}" fill="${fill}" ${extra}/>`;
    };
    const hline = (y, w = axisX) => rect(0, Math.floor(y), w, 1, '#2b3139');
    const line = (values, y, color) => {
        const pts = values.map((v, i) => `${barX(i) + 0.5},${y(v).toFixed(1)}`);
        // carry the first value to the left edge of the pane
        pts.unshift(`0,${y(values[0]).toFixed(1)}`);
        out += `<polyline points="${pts.join(' ')}" fill="none" stroke="${color}"/>`;
    };
    const label = (x, y, text, cls = '', anchor = 'start') => {
        out += `<text x="${x}" y="${Math.round(y) + 4}" class="${cls}" text-anchor="${anchor}">${text}</text>`;
    };
    const money = v => v.toFixed(2).replace('-', '−');

    // Grid and time axis
    let day = 1;
    const months = [[2, 28], [3, 31], [4, 30], [5, 31], [6, 30], [7, 31], [8, 31], [9, 30], [10, 31], [11, 30], [12, 31]];
    for (const [month, days] of months) {
        [0, 9, 18].forEach(d => {
            const x = barX(day + d);
            rect(x, 0, 1, bottom, '#2b3139');
            label(x, 1143 * k, d === 0 ? month + '月' : d + 1, '', 'middle');
        });
        day += days;
    }
    rect(barX(day), 0, 1, bottom, '#2b3139');
    label(barX(day), 1143 * k, '2026', '', 'middle');

    for (let p = 5400; p >= 1200; p -= 200) {
        hline(priceY(p));
        label(axisX + 8, priceY(p), money(p));
    }
    for (let v = 300; v >= -200; v -= 100) {
        hline(macdY(v));
        if (v !== -100) label(axisX + 8, macdY(v), money(v));
    }
    [80, 40, 0].forEach(v => {
        hline(stochY(v));
        if (v) label(axisX + 8, stochY(v), money(v));
    });
    hline(726 * k, W);
    hline(1003 * k, W);
    hline(bottom, W);
    rect(axisX, 0, 1, H, '#2b3139');

    // Bollinger bands and averages
    const upper = band(1, lead.upper), lower = band(-1, lead.lower);
    const edge = upper.map((v, i) => `${i ? barX(i) : 0},${priceY(v).toFixed(1)}`)
        .concat(lower.map((v, i) => `${i ? barX(i) : 0},${priceY(v).toFixed(1)}`).reverse());
    out += `<polygon points="${edge.join(' ')}" fill="#2196f3" fill-opacity="0.08"/>`;
    line(sma(20, lead.basis), priceY, '#ff6d00');
    line(upper, priceY, '#2196f3');
    line(lower, priceY, '#2196f3');
    line(sma(5, lead.ma5), priceY, '#ffeb3b');
    line(sma(10, lead.ma10), priceY, '#f23645');
    line(sma(30, lead.ma30), priceY, '#4caf50');
    line(sma(60, lead.ma60), priceY, '#651fff');
    line(sma(120, lead.ma120), priceY, '#085e5d');
    line(closes.map((c, i) => early(lead.ma240, i)), priceY, '#e71af3');
    line(closes.map((c, i) => early(lead.ma360, i)), priceY, '#fff');

    // Candles
    bars.forEach(([open, close, high, low], i) => {
        const color = close > open ? '#2ebd85' : '#f6465d';
        const x = barX(i);
        const top = Math.round(priceY(Math.max(open, close)));
        const height = Math.max(1, Math.round(priceY(Math.min(open, close))) - top);
        const wick = Math.round(priceY(high));
        rect(x, wick, 1, Math.max(1, Math.round(priceY(low)) - wick), color);
        rect(x - 3, top, 7, height, color);
    });
    out += `<path d="M0 ${Math.floor(245 * k) + 0.5}H${axisX}" stroke="#f6465d" stroke-dasharray="1 2"/>`;

    // MACD
    const m = macd();
    m.forEach(({ hist }, i) => {
        const growing = i === 0 || hist >= m[i - 1].hist;
        const color = hist >= 0 ? (growing ? '#22ab94' : '#ace5dc') : (growing ? '#fccbcd' : '#ff5252');
        const zero = Math.floor(macdY(0));
        const y = Math.round(macdY(hist));
        const top = Math.min(zero, y);
        rect(barX(i) - 4, top, barX(i + 1) - barX(i) - 1, Math.max(1, Math.abs(y - zero) + 1), color);
    });
    line(m.map(v => v.line), macdY, '#2196f3');
    line(m.map(v => v.signal), macdY, '#ff6d00');

    // Stoch RSI
    const high = Math.floor(stochY(70)), low = Math.floor(stochY(30));
    rect(0, high, axisX, low - high, '#2196f3', 'fill-opacity="0.1"');
    out += `<path d="M0 ${high + 0.5}H${axisX}M0 ${low + 0.5}H${axisX}" stroke="#848e9c" stroke-dasharray="5 6"/>`;
    const K = closes.map((c, i) => (1180 - lerp(stochK, i)) / 3.07);
    const D = K.map((v, i) => i === 0 ? 32 : i === 1 ? 50 : (v + K[i - 1] + K[i - 2]) / 3);
    line(K, stochY, '#2196f3');
    line(D, stochY, '#ff6d00');

    // Value tags on the price scale
    const tags = [
        [111.5, '4772.03', '#2196f3'], [174.5, '4326.94', '#651fff'], [191.5, '4197.93', '#ff6d00'],
        [208.5, '4177.56', '#4caf50'], [228.5, '3978.52', '#f23645'], [245.5, '3954.02', '#f6465d'],
        [262.5, '3908.73', '#ffeb3b', 1], [279.5, '3878.25', '#085e5d'], [299.5, '3623.83', '#2196f3'],
        [388.5, '3076.89', '#ffffff', 1], [405.5, '3011.33', '#e71af3'],
        [900.5, '−25.62', '#fccbcd', 1], [925.5, '−84.91', '#ff6d00'], [942.5, '−110.53', '#2196f3'],
        [1099.5, '28.41', '#ff6d00'], [1082.5, '35.73', '#2196f3']
    ];
    tags.forEach(([y, text, color, dark]) => {
        const w = text.length > 6 ? 56 : text.length > 5 ? 49 : 43;
        const cy = Math.round(y * k);
        rect(axisX, cy - 9, w, 17, color, 'rx="1"');
        label(axisX + 8, cy - 1, text, dark ? 'tag dark' : 'tag');
    });
    rect(axisX + 1, Math.round(1100 * k), 59, bottom - Math.round(1100 * k), '#181a20');

    const svg = document.getElementById('chart');
    svg.setAttribute('viewBox', `0 0 ${W} ${H}`);
    svg.innerHTML = out;
}

draw();
window.addEventListener('resize', draw);
```
